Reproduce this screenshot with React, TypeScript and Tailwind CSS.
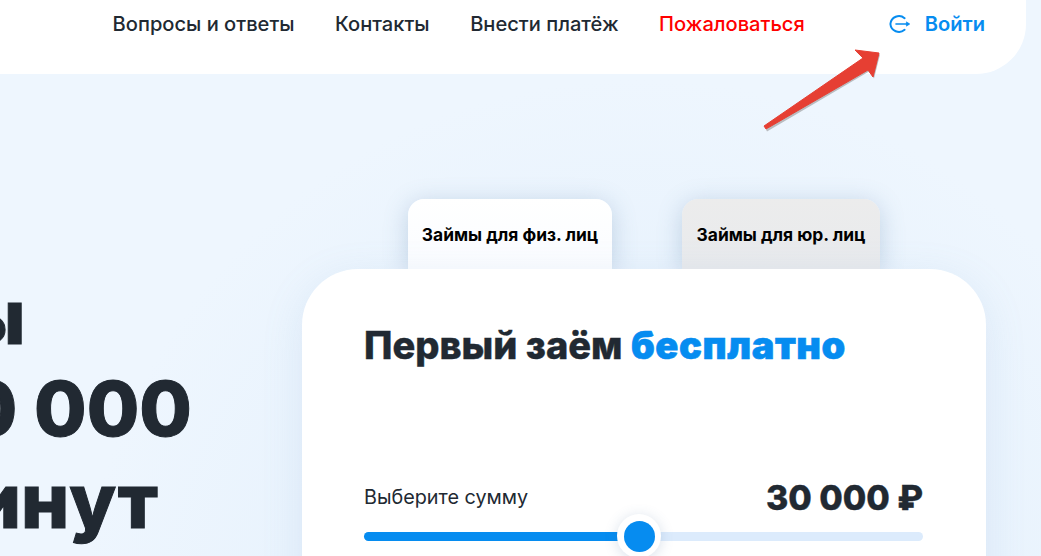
import React from 'react';

const navItems = ['Вопросы и ответы', 'Контакты', 'Внести платёж'];

function LoginIcon() {
  return (
    <svg width="22" height="20" viewBox="0 0 22 20" fill="none" stroke="#068cf0" strokeWidth="2">
      <path d="M15.6 4.2A8.6 8.6 0 0 0 1.4 10a8.6 8.6 0 0 0 14.2 5.8" strokeLinecap="round" />
      <path d="M7 10h12" strokeWidth="1.6" strokeLinecap="round" />
      <path d="M17.4 7.8v4.4l3.4-2.2z" fill="#068cf0" strokeWidth="0.6" />
    </svg>
  );
}

function Arrow() {
  return (
    <svg className="absolute left-[760px] top-[46px]" width="124" height="86" viewBox="0 0 124 86">
      <polygon points="5,82 103,12 95,4 119,7 113,31 108,24 6,84" fill="#b9bcc0" transform="translate(1 1.5)" />
      <polygon points="4,80 103,12 95,4 119,7 113,31 108,24 6,83" fill="#e63f33" stroke="#e63f33" strokeWidth="1" strokeLinejoin="round" />
    </svg>
  );
}

export default function App() {
  return (
    <div className="relative h-[556px] w-[1041px] overflow-hidden bg-[radial-gradient(circle_at_640px_640px,#deedfb_0%,#e9f3fd_40%,#eef6fe_62%)] font-['Inter',sans-serif] text-[#212932]">
      <header className="flex h-[74px] w-[1026px] items-start justify-end rounded-br-[50px] bg-white pr-[41px] pt-[10px] text-[20.1px] font-medium leading-[28px]">
        <nav className="flex items-center gap-[40.5px]">
          {navItems.map((item) => (
            <span key={item}>{item}</span>
          ))}
          <span className="text-[#ff0000]">Пожаловаться</span>
        </nav>
        <div className="ml-[84px] flex items-center gap-[14px] font-semibold text-[#068cf0]">
          <LoginIcon />
          <span>Войти</span>
        </div>
      </header>
      <Arrow />

      <main className="flex">
        <div className="ml-[-237px] mt-[196px] w-[539px] shrink-0 whitespace-nowrap text-[76px] font-extrabold leading-[92px] [-webkit-text-stroke:1px_#212932]">
          <div className="ml-[-7px]">Займы</div>
          <div>до 100 000</div>
          <div className="ml-[-21px]">за 5 минут</div>
        </div>

        <section className="mt-[125px] w-[684px] shrink-0">
          <div className="ml-[106px] flex h-[70px] gap-[70px] text-[17.4px] font-bold text-black">
            <div className="flex w-[204px] justify-center rounded-t-[16px] bg-gradient-to-b from-white to-[#fafcff] pt-[23px] shadow-[0_4px_24px_rgba(90,130,170,0.3)]">
              Займы для физ. лиц
            </div>
            <div className="flex w-[198px] justify-center rounded-t-[16px] bg-gradient-to-b from-[#ececec] to-[#e8eaed] pt-[23px] shadow-[0_4px_24px_rgba(90,130,170,0.3)]">
              Займы для юр. лиц
            </div>
          </div>
          <div className="relative h-[400px] rounded-[56px] bg-white pl-[62px] pr-[63px] pt-[50px] shadow-[0_10px_40px_rgba(120,160,200,0.15)]">
            <h1 className="text-[38px] font-extrabold leading-[52px] [-webkit-text-stroke:0.4px_#212932]">
              Первый заём{' '}
              <span className="font-black tracking-[0.6px] text-[#068cf0] [-webkit-text-stroke:0.6px_#068cf0]">бесплатно</span>
            </h1>
            <div className="mt-[105px] flex items-center justify-between">
              <span className="text-[19.8px]">Выберите сумму</span>
              <span className="text-[34px] font-extrabold leading-[44px] [-webkit-text-stroke:0.4px_#212932]">30 000 ₽</span>
            </div>
            <div className="relative mt-[12px] h-[9px] rounded-full bg-[#dcebfc]">
              <div className="h-full w-[275px] rounded-full bg-[#068cf0]" />
              <div className="absolute left-[253px] top-[-18px] flex h-[44px] w-[44px] items-center justify-center rounded-full bg-white shadow-[0_2px_14px_rgba(60,100,150,0.2)]">
                <div className="h-[31px] w-[31px] rounded-full bg-[#068cf0]" />
              </div>
            </div>
          </div>
        </section>
      </main>
    </div>
  );
}
